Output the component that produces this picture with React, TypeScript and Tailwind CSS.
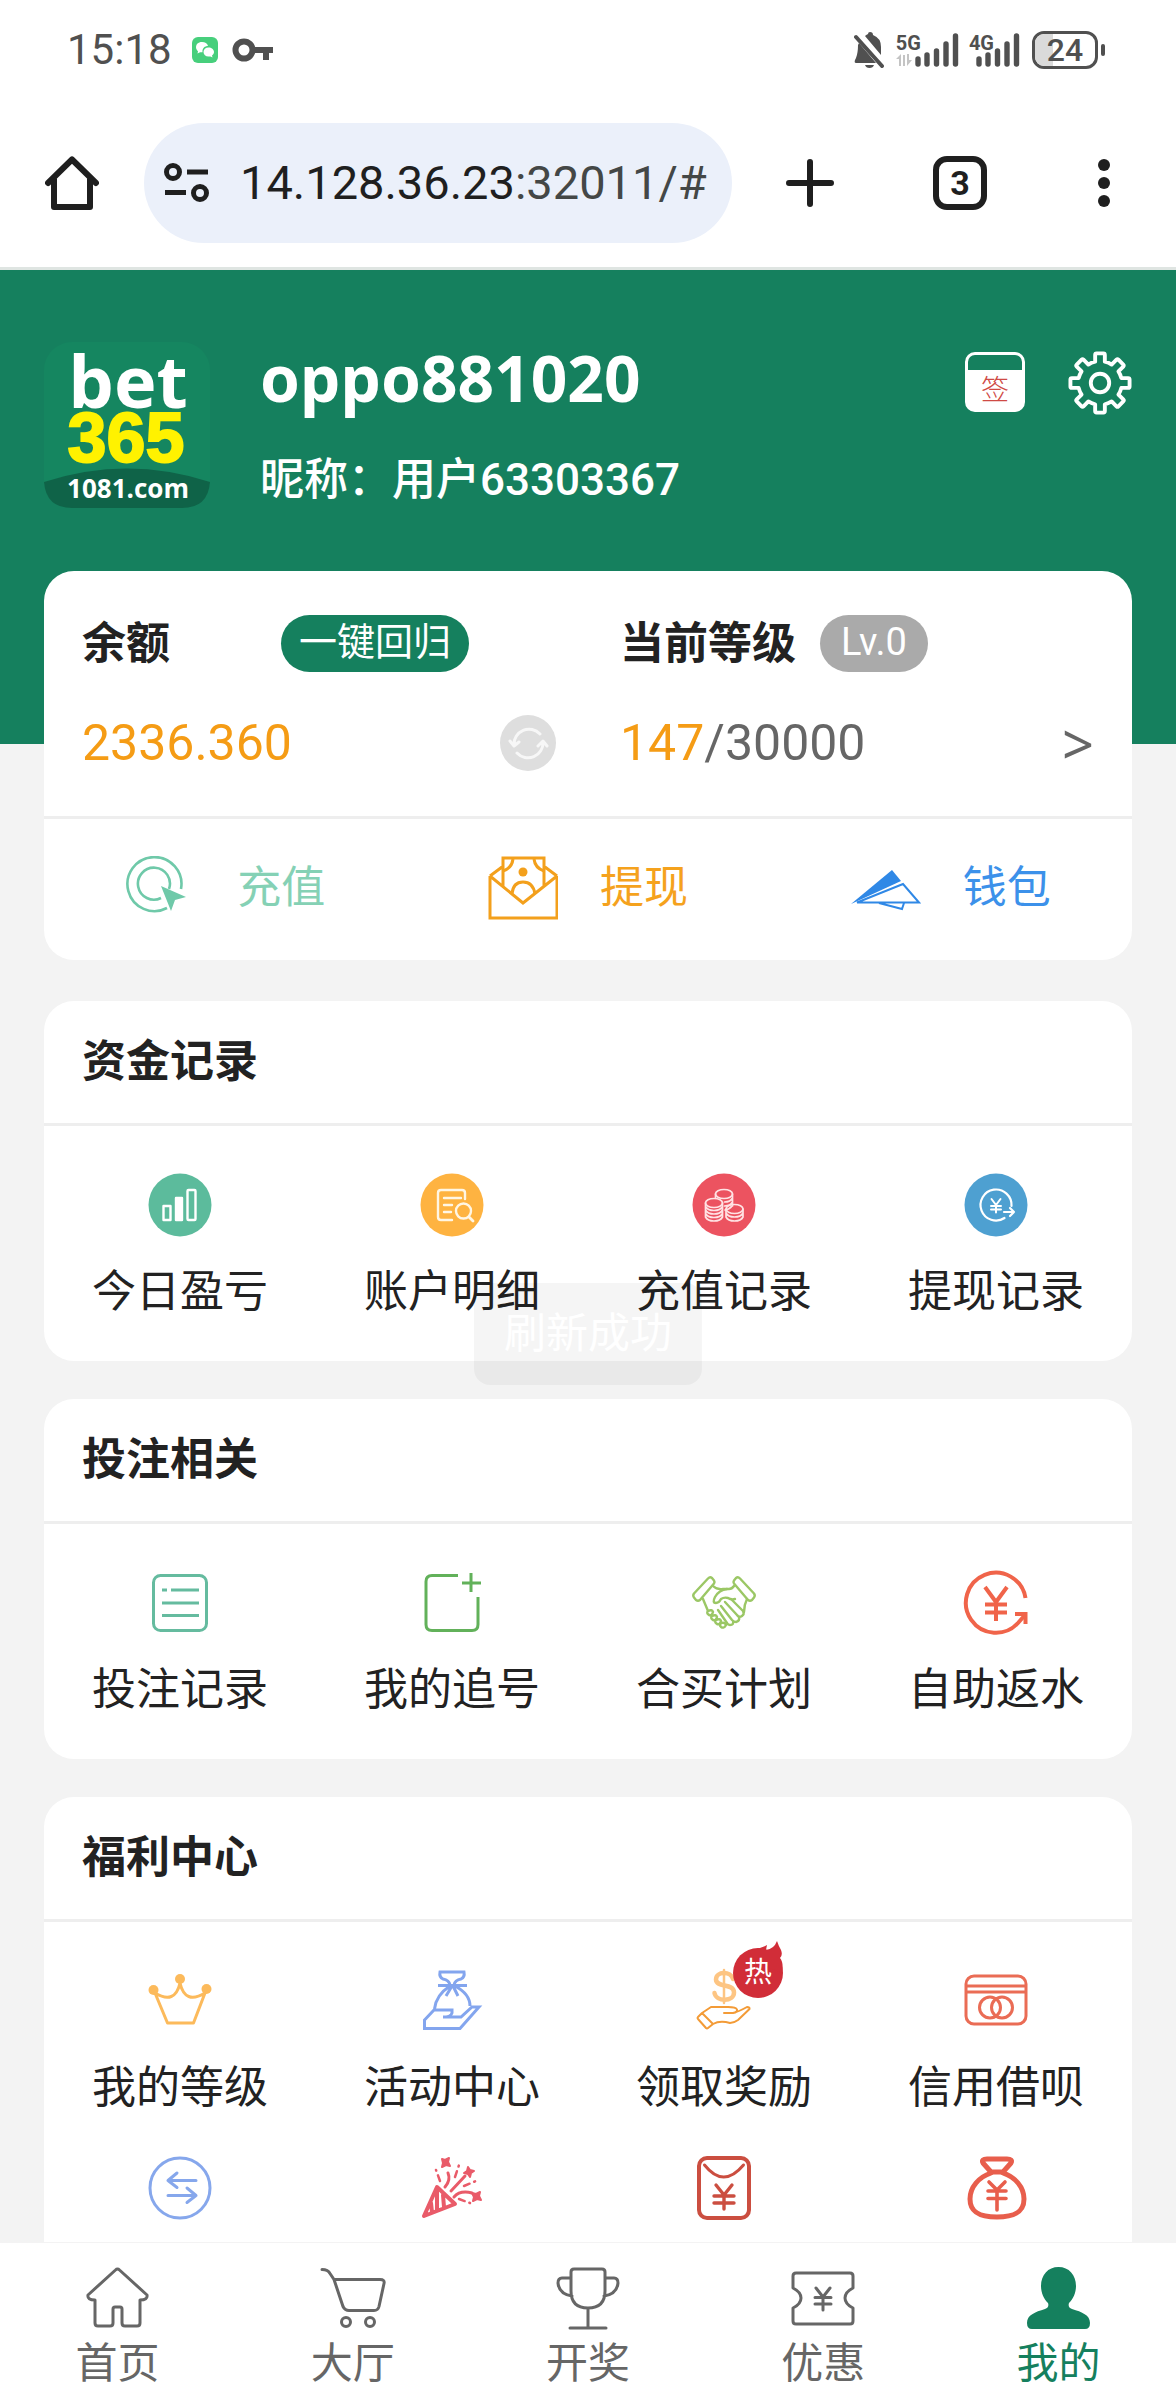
import React from 'react';

type IconProps = { className?: string; children: React.ReactNode };

// 64x64 stroke icon shared by the menu cards and the tab bar
function Icon({ className = '', children }: IconProps) {
    return (
        <svg
            viewBox="0 0 64 64"
            className={`h-16 w-16 shrink-0 overflow-visible ${className}`}
            fill="none"
            stroke="currentColor"
            strokeWidth="3"
            strokeLinecap="round"
            strokeLinejoin="round"
            aria-hidden="true"
        >
            {children}
        </svg>
    );
}

function ProfitIcon() {
    return (
        <Icon className="text-white">
            <circle cx="32" cy="32" r="31.5" fill="#5cbb9c" stroke="none" />
            <g strokeWidth="2.4">
                <rect x="15.5" y="33" width="7" height="14" />
                <rect x="28" y="25" width="6" height="22" fill="currentColor" />
                <rect x="39.5" y="17" width="8" height="30" rx="1" />
            </g>
        </Icon>
    );
}

function LedgerIcon() {
    return (
        <Icon className="text-[#fff6e4]">
            <circle cx="32" cy="32" r="31.5" fill="#feb341" stroke="none" />
            <path strokeWidth="2.4" d="M45 26V20q0-3-3-3H21q-3 0-3 3v24q0 3 3 3h11M24 25h17M24 32h8M24 39h7" />
            <circle cx="43.5" cy="38" r="7.5" strokeWidth="2.4" />
            <path strokeWidth="2.8" d="M49 44l4 4" />
        </Icon>
    );
}

function CoinsIcon() {
    return (
        <Icon className="text-[#ffe3e4]">
            <circle cx="32" cy="32" r="31.5" fill="#ec5360" stroke="none" />
            <g strokeWidth="1.7">
                <ellipse cx="32" cy="21" rx="8.5" ry="4.5" />
                <path d="M23.5 21v4M40.5 21v12M40.5 25q-2 4-8 4M40.5 29q-2 4-8 4M40 33q-2 3-7 4" />
                <ellipse cx="22" cy="30" rx="8.5" ry="4.5" />
                <path d="M13.5 30v14q2 4 8.5 4t8.5-4V30M13.5 33.5q2 4 8.5 4t8.5-4M13.5 37q2 4 8.5 4t8.5-4M13.5 40.5q2 4 8.5 4t8.5-4" />
                <ellipse cx="42.5" cy="36" rx="8.5" ry="4.5" />
                <path d="M34 36v8q2 4 8.5 4t8.5-4v-8M34 40q2 4 8.5 4t8.5-4" />
            </g>
        </Icon>
    );
}

function WithdrawLogIcon() {
    return (
        <Icon className="text-white">
            <circle cx="32" cy="32" r="31.5" fill="#4ea0d1" stroke="none" />
            <path strokeWidth="2.2" d="M47.5 33a15.5 15.5 0 1 0-7 12" />
            <path strokeWidth="2" d="M27.5 26l4.5 6 4.5-6M32 32v7.5M27 33h10M27 36.5h10" />
            <path strokeWidth="2.2" d="M40 39h10M46 35l4 4-4 4" />
        </Icon>
    );
}

function BetListIcon() {
    return (
        <Icon className="text-[#65bb9f]">
            <rect x="5.5" y="4.5" width="53" height="55" rx="7" />
            <path strokeLinecap="butt" d="M14 19h5M23 19h28M14 32h37M14 44.5h37" />
        </Icon>
    );
}

function ChaseIcon() {
    return (
        <Icon className="text-[#62b15a]">
            <path strokeLinecap="butt" d="M38 4.5H12q-6 0-6 6v43q0 6 6 6h40q6 0 6-6V26" />
            <path strokeLinecap="butt" d="M51 2v19M42 12h19" />
        </Icon>
    );
}

function HandshakeIcon() {
    return (
        <Icon className="text-[#9bc765]">
            <g strokeWidth="2.4">
                <path d="M16 7.5q2-2 4-.5l2 2.5q1 1.5 0 3L8 29q-2 1.5-4 0l-2-2.5q-1.5-2 0-4Z" />
                <path d="M48 7.5q-2-2-4-.5l-2 2.5q-1 1.5 0 3L56 29q2 1.5 4 0l2-2.5q1.5-2 0-4Z" />
                <path d="M21 15q4 4 10 3h6q3 0 5-3M11 28l5 12" />
                <path d="M35 18q-8 1-12 8-3 6 1 6 3 0 5-4 3-2 7-1 3 2 7 1" />
                <path d="M55 28q-3 6-3 13M39 28l12 12q2 3-1 5t-5-1L33 31M47 46q1 4-3 5-2 0-4-2L29 35M41 50q1 4-3 4-2 0-3-2L26 39" />
                <path d="M16 40q4-2 5 1-1 4-4 3-3-2-1-4ZM20 45q4-2 5 1-1 4-4 3-3-2-1-4ZM24 49q4-2 5 1-1 4-4 3-3-2-1-4ZM29 52q4-1 5 2-2 4-5 2-2-2 0-4Z" />
            </g>
        </Icon>
    );
}

function RebateIcon() {
    return (
        <Icon className="text-[#f0644a]">
            <g strokeWidth="4" strokeLinecap="butt" strokeLinejoin="miter">
                <path d="M61.5 27A30 30 0 1 0 54 52l7-8" />
                <path d="M51 43h10.5v10" />
                <path d="M21 16l11 15 11-15M32 30v20M21 33.5h22M21 41.5h22" />
            </g>
        </Icon>
    );
}

function CrownIcon() {
    return (
        <Icon className="text-[#fcba5b]">
            <path d="M7 24l12.5 30h26L57 24Q37 36 32 14 27 36 7 24Z" />
            <g fill="currentColor" stroke="none">
                <circle cx="5.5" cy="21" r="5" />
                <circle cx="32" cy="10" r="5" />
                <circle cx="58.5" cy="20" r="5" />
            </g>
        </Icon>
    );
}

function ActivityIcon() {
    return (
        <Icon className="text-[#83a5ee]">
            <g strokeLinejoin="miter" strokeLinecap="butt">
                <path d="M30 16q-1-5-7-6-4-2-3-7h24q1 5-3 7-6 1-7 6M18 16.5h29" />
                <path d="M30 17q-14 9-15.5 23M35 17q15 8 15 20M32 17l-6 10M33 17l5 10" />
                <path d="M14 41h18v3q-1 4-9 4h18l11-10h7L40 59.5H4.5V51Z" />
            </g>
        </Icon>
    );
}

function RewardIcon() {
    return (
        <Icon className="text-[#f39b37]">
            <g className="text-[#fdc583]" strokeWidth="4.5">
                <path d="M41 10C39 2 24 2 24 10.5 24 19 42 14 42 23.5 42 33 24 33 22.5 24" />
                <path strokeWidth="2.5" d="M32 1v33" />
            </g>
            <path
                strokeWidth="2"
                d="M10 44l-4 4q-1 1 0 2l8 9q1 1 2 0l5-4ZM10 44l9-6h17q8 0 9 2.5t-4 3.5H32M41 44q5-1 14-6 3 0 2.5 2L46 51q-4 3-8 3-10-3-17 1"
            />
        </Icon>
    );
}

function CreditIcon() {
    return (
        <Icon className="text-[#ea6c55]">
            <rect x="2" y="7" width="60" height="48" rx="8" />
            <path strokeLinecap="butt" d="M2 17h60M2 23h60" />
            <circle cx="26" cy="38.5" r="10.5" />
            <circle cx="38" cy="38.5" r="10.5" />
        </Icon>
    );
}

function TransferIcon() {
    return (
        <Icon className="text-[#86a7ec]">
            <circle cx="32" cy="32" r="30" />
            <path d="M48 24.5H20M29 17l-9 7.5 9 7M20 39.5h28M39 32l9 7.5-9 7" />
        </Icon>
    );
}

function PartyIcon() {
    return (
        <Icon className="text-[#e95b69]">
            <path strokeWidth="4" d="M17 31l18 17L4 60ZM17 34v20M23 39l1 12M11 47l1 9" />
            <g strokeWidth="3">
                <path d="M25 31q6-7 3-14M31 35l14-15M34 41q6-7 18-4" />
                <path strokeWidth="2.5" strokeDasharray="6 5 1 9" d="M20 25l-4-11M35 21l4-12M44 30l12-5M39 43l11 4" />
            </g>
            <g fill="currentColor" strokeWidth="2">
                <path d="M22 3l3 1 4-2-1 4 2 4-4-1-4 2 1-4ZM48 11l2 3 4 1-3 2-1 4-2-3-4-1 3-2ZM60 36l-1 4 2 4-4-1-4 2 1-4-2-4 4 1Z" />
            </g>
        </Icon>
    );
}

function RedPacketIcon() {
    return (
        <Icon className="text-[#cb4e40]">
            <rect x="7" y="2" width="50" height="60" rx="8" strokeWidth="4" />
            <path d="M12.5 9q19 24 39 0" />
            <path strokeWidth="3.4" d="M24 29l8 10 8-10M32 39v14M22 40h20M22 47h20" />
        </Icon>
    );
}

function BonusIcon() {
    return (
        <Icon className="text-[#e85e4c]">
            <g strokeWidth="5">
                <path d="M23 3h20q6 0 4 4l-8 9H27l-8-9q-2-4 4-4Z" />
                <path d="M27 17C15 21 6 31 6 43c0 13 9 18 27 18s27-5 27-18c0-12-9-22-21-26" />
            </g>
            <path strokeWidth="3.6" d="M25 26l8 8 8-8M33 34v20M24 35h18M24 42.5h18" />
        </Icon>
    );
}

type MenuItem = { label: string; icon: React.ReactNode; hot?: boolean; hideLabel?: boolean };

const fundItems: MenuItem[] = [
    { label: '今日盈亏', icon: <ProfitIcon /> },
    { label: '账户明细', icon: <LedgerIcon /> },
    { label: '充值记录', icon: <CoinsIcon /> },
    { label: '提现记录', icon: <WithdrawLogIcon /> },
];

const betItems: MenuItem[] = [
    { label: '投注记录', icon: <BetListIcon /> },
    { label: '我的追号', icon: <ChaseIcon /> },
    { label: '合买计划', icon: <HandshakeIcon /> },
    { label: '自助返水', icon: <RebateIcon /> },
];

const welfareItems: MenuItem[] = [
    { label: '我的等级', icon: <CrownIcon /> },
    { label: '活动中心', icon: <ActivityIcon /> },
    { label: '领取奖励', icon: <RewardIcon />, hot: true },
    { label: '信用借呗', icon: <CreditIcon /> },
    { label: '转换', icon: <TransferIcon />, hideLabel: true },
    { label: '庆典', icon: <PartyIcon />, hideLabel: true },
    { label: '红包', icon: <RedPacketIcon />, hideLabel: true },
    { label: '奖金', icon: <BonusIcon />, hideLabel: true },
];

function HotBadge() {
    return (
        <span className="absolute -top-6 left-10 flex h-14 w-[52px] items-center justify-center text-[28px] leading-none text-white">
            <svg viewBox="0 0 52 56" className="absolute inset-0 h-full w-full overflow-visible" fill="#d12d38" aria-hidden="true">
                <circle cx="26" cy="28" r="25" />
                <path d="M16 6Q28 4 35 0l-1 5Q42 4 45-4q2 6 4 9 2 5-1 8 4 5 2 15L30 20Z" />
            </svg>
            <span className="relative">热</span>
        </span>
    );
}

function MenuCard({ title, items, open, children }: { title: string; items: MenuItem[]; open?: boolean; children?: React.ReactNode }) {
    return (
        <section className={open ? 'relative rounded-t-[30px] bg-white pb-[22px]' : 'relative rounded-[30px] bg-white pb-9'}>
            <h2 className="border-b-[3px] border-[#eee] px-[38px] text-[44px] leading-[122px] font-bold">{title}</h2>
            <div className="grid grid-cols-4 gap-y-[35px] pt-[47px]">
                {items.map((item) => (
                    <button key={item.label} type="button" aria-label={item.label} className="flex flex-col items-center">
                        <span className="relative">
                            {item.icon}
                            {item.hot && <HotBadge />}
                        </span>
                        {!item.hideLabel && <span className="mt-[22px] text-[44px] leading-[66px]">{item.label}</span>}
                    </button>
                ))}
            </div>
            {children}
        </section>
    );
}

function SignalBars() {
    return (
        <svg viewBox="0 0 44 34" className="h-[34px] w-11" stroke="currentColor" strokeWidth="5.4" strokeLinecap="round" aria-hidden="true">
            <path d="M3 26v5M12 22v9M21.5 18v13M31 11v20M40.5 3v28" />
        </svg>
    );
}

function StatusBar() {
    return (
        <div className="flex h-[100px] items-center pr-[71px] pl-[67px] text-[#505050]">
            <span className="text-[42px] leading-none">15:18</span>
            <svg viewBox="0 0 26 26" className="ml-5 h-[26px] w-[26px]" aria-hidden="true">
                <rect width="26" height="26" rx="6" fill="#47cf7c" />
                <path fill="#fff" d="M10 5c-4 0-6 2.5-6 5.2 0 1.8 1 3 2 4l-.5 2.2 2.5-1.2h2.5C10 11 13 9 16 9c-.5-2.5-3-4-6-4Z" />
                <path fill="#fff" d="M16.5 10.5c-3 0-5 2-5 4.5s2 4.5 5 4.5h2l2 1-.5-2c1.2-1 2-2 2-3.5 0-2.5-2.5-4.5-5.5-4.5Z" />
            </svg>
            <svg viewBox="0 0 42 26" className="ml-[14px] h-[26px] w-[42px]" fill="none" stroke="currentColor" aria-hidden="true">
                <circle cx="12" cy="13" r="8.5" strokeWidth="6" />
                <path strokeWidth="6" d="M21 13h20M34 13v10" />
            </svg>
            <div className="ml-auto flex items-center">
                <svg viewBox="0 0 30 36" className="mr-3 h-9 w-[30px]" fill="currentColor" aria-hidden="true">
                    <path d="M4 13q0 8-2 13l-1 2q-1 3 1 3h20L5 11ZM11 4q1-1 3-2 0-2 2-2 3 0 3 3 8 3 8 12v8ZM11 33h9q-1 3-4.5 3T11 33Z" />
                    <path d="M2 5l26 29" stroke="currentColor" strokeWidth="4" strokeLinecap="round" />
                </svg>
                <span className="flex">
                    <span className="-mr-1.5 flex flex-col items-start">
                        <span className="text-[20px] leading-[20px] font-bold">5G</span>
                        <svg viewBox="0 0 16 12" className="h-[14px] w-4 text-[#c4c4c4]" fill="currentColor" aria-hidden="true">
                            <path d="M0 5l5-5v12H3V5ZM7 1h2v11H7ZM11 0h2v6h3l-5 6Z" />
                        </svg>
                    </span>
                    <SignalBars />
                </span>
                <span className="ml-[10px] flex">
                    <span className="-mr-[18px] text-[20px] leading-[20px] font-bold">4G</span>
                    <SignalBars />
                </span>
                <span className="relative ml-3 flex h-[38px] w-[66px] items-center justify-center overflow-hidden rounded-xl border-[3px] border-current text-[32px] leading-none font-medium">
                    <span className="absolute inset-y-0 left-0 w-[18px] bg-[#dadada]" />
                    <span className="relative">24</span>
                </span>
                <span className="ml-[3px] h-3 w-1 rounded-full bg-current" />
            </div>
        </div>
    );
}

function BrowserBar() {
    return (
        <div className="flex h-[170px] items-center border-b-[3px] border-[#dfe5e2] pr-[60px] pb-[2px] pl-[45px] text-[#1f1f1f]">
            <button type="button" aria-label="主页" className="shrink-0">
                <svg viewBox="0 0 54 54" className="h-[54px] w-[54px]" fill="none" stroke="currentColor" strokeWidth="6" strokeLinecap="round" strokeLinejoin="round" aria-hidden="true">
                    <path d="M3 27L27 3.5 51 27M9 23v28h36V23" />
                </svg>
            </button>
            <form className="ml-[45px] flex h-[120px] min-w-0 flex-1 items-center rounded-full bg-[#ebf0fa] pr-4 pl-5" onSubmit={(e) => e.preventDefault()}>
                <svg viewBox="0 0 46 40" className="h-10 w-[46px] shrink-0" fill="none" stroke="currentColor" strokeWidth="5" aria-hidden="true">
                    <circle cx="9" cy="9" r="6.5" />
                    <path d="M23 9h21M1 29.5h21" />
                    <circle cx="36" cy="30" r="6.5" />
                </svg>
                <label htmlFor="url" className="ml-[30px] flex min-w-0 flex-1 overflow-hidden text-[47px] leading-[60px] whitespace-nowrap">
                    <span>14.128.36.23</span>
                    <input id="url" aria-label="网址" defaultValue=":32011/#" className="w-full min-w-0 flex-1 bg-transparent text-[#444746] outline-none" />
                </label>
            </form>
            <button type="button" aria-label="新标签页" className="ml-[54px] shrink-0">
                <svg viewBox="0 0 48 48" className="h-12 w-12" stroke="currentColor" strokeWidth="6" strokeLinecap="round" aria-hidden="true">
                    <path d="M24 3v42M3 24h42" />
                </svg>
            </button>
            <button type="button" className="ml-[99px] flex h-[54px] w-[54px] shrink-0 items-center justify-center rounded-[14px] border-6 border-current text-[34px] leading-none font-bold">
                3
            </button>
            <button type="button" aria-label="更多" className="ml-[105px] flex w-6 shrink-0 flex-col items-center gap-[6px]">
                <span className="h-3 w-3 rounded-full bg-current" />
                <span className="h-3 w-3 rounded-full bg-current" />
                <span className="h-3 w-3 rounded-full bg-current" />
            </button>
        </div>
    );
}

function Logo() {
    return (
        <svg viewBox="0 0 166 166" className="h-[166px] w-[166px] shrink-0" textAnchor="middle" fontWeight="700" role="img" aria-label="bet365">
            <rect width="166" height="166" rx="28" fill="#158660" />
            <path d="M0 140Q83 113 166 140 164 166 138 166H28Q2 166 0 140Z" fill="#0f6348" />
            <text x="84" y="66" fontFamily="Open Sans, sans-serif" fontSize="72" fill="#fff">bet</text>
            <text x="82" y="120" fontFamily="Liberation Sans, sans-serif" fontSize="70" fill="#fff200" stroke="#fff200" strokeWidth="2">365</text>
            <text x="84" y="156" fontFamily="Open Sans, sans-serif" fontSize="26" fill="#fff">1081.com</text>
        </svg>
    );
}

function ProfileHeader() {
    return (
        <header className="flex items-start bg-[#15805e] px-11 pt-[72px] pb-[236px] text-white">
            <Logo />
            <div className="ml-[50px] flex-1">
                <h1 className="font-['Noto_Sans'] text-[64px] leading-[72px] font-bold">oppo881020</h1>
                <p className="mt-[38px] text-[44px] leading-[56px] font-medium">昵称：用户63303367</p>
            </div>
            <button type="button" className="mt-[10px] flex h-[60px] w-[60px] items-end justify-center rounded-[10px] border-[3px] border-white bg-linear-to-b from-[#15805e] from-27% to-white to-27% text-[28px] leading-[36px] font-light text-[#cf4a45]">
                签
            </button>
            <button type="button" aria-label="设置" className="mt-[9px] ml-[43px]">
                <svg viewBox="-1 -1 66 66" className="h-16 w-16" fill="none" stroke="currentColor" strokeWidth="4" strokeLinejoin="round" aria-hidden="true">
                    <path d="M27 10V3q0-1.5 1.5-1.5h7Q37 1.5 37 3v7q4 1 7 3l5-5q1-1 2 0l5 5q1 1 0 2l-5 5q2 3 3 7h7q1.5 0 1.5 1.5v7Q62.5 37 61 37h-7q-1 4-3 7l5 5q1 1 0 2l-5 5q-1 1-2 0l-5-5q-3 2-7 3v7q0 1.5-1.5 1.5h-7Q27 62.5 27 61v-7q-4-1-7-3l-5 5q-1 1-2 0l-5-5q-1-1 0-2l5-5q-2-3-3-7H3q-1.500 0-1.500-1.500v-7Q1.5 27 3 27h7q1-4 3-7l-5-5q-1-1 0-2l5-5q1-1 2 0l5 5q3-2 7-3Z" />
                    <circle cx="32" cy="32" r="9.5" />
                </svg>
            </button>
        </header>
    );
}

function BalanceCard() {
    return (
        <section className="rounded-[30px] bg-white">
            <div className="grid grid-cols-2 border-b-[3px] border-[#eee] pt-11 pb-11">
                <div className="pr-8 pl-[38px]">
                    <div className="flex h-[57px] items-center">
                        <h2 className="text-[44px] leading-[54px] font-bold">余额</h2>
                        <button type="button" className="ml-[111px] h-[57px] rounded-full bg-[#15805e] px-[18px] pb-1 text-[38px] leading-[50px] text-white">
                            一键回归
                        </button>
                    </div>
                    <div className="mt-[42px] flex h-[58px] items-center justify-between">
                        <span className="text-[50px] leading-[58px] text-[#f59c15]">2336.360</span>
                        <button type="button" aria-label="刷新" className="h-14 w-14 rounded-full bg-[#dedede] text-[#f7f7f7]">
                            <svg viewBox="0 0 56 56" className="h-14 w-14" fill="none" stroke="currentColor" strokeWidth="3" strokeLinecap="round" strokeLinejoin="round" aria-hidden="true">
                                <path d="M40 19A15 15 0 0 0 14 30M10 26l4 5 5-4M17 38a15 15 0 0 0 26-11M38 31l5-5 4 5" />
                            </svg>
                        </button>
                    </div>
                </div>
                <div className="pr-[38px] pl-8">
                    <div className="flex h-[57px] items-center">
                        <h2 className="text-[44px] leading-[54px] font-bold">当前等级</h2>
                        <span className="ml-6 h-[57px] rounded-full bg-[#aaa] px-[21px] text-[38px] leading-[54px] text-white">Lv.0</span>
                    </div>
                    <a href="#level" className="mt-[42px] flex h-[58px] items-center justify-between text-[50px] leading-[58px] text-[#666]">
                        <span>
                            <span className="text-[#f59c15]">147</span>/30000
                        </span>
                        <span className="font-['Noto_Sans'] text-[56px]">&gt;</span>
                    </a>
                </div>
            </div>
            <div className="grid h-[141px] grid-cols-3 pb-1 text-[44px]">
                <button type="button" className="flex items-center justify-center gap-[42px] text-[#85d1b5]">
                    <svg viewBox="0 0 70 64" className="h-16 w-[70px]" fill="none" stroke="#6fc9a9" strokeWidth="2.6" aria-hidden="true">
                        <path d="M56 33A27 27 0 1 0 42 52M44 33a16 16 0 1 0-8 9" />
                        <path fill="#6fc9a9" stroke="none" d="M36 30l25 11-11 3-4 11Z" />
                    </svg>
                    充值
                </button>
                <button type="button" className="flex items-center justify-center gap-[42px] text-[#f5a21d]">
                    <svg viewBox="0 0 70 64" className="h-16 w-[70px]" fill="none" stroke="#f3a01c" strokeWidth="3" aria-hidden="true">
                        <path d="M2 20v42h67V20M2 20l33 27 34-27M2 20l12-9M69 20l-12-9M15 30V2h41v28" />
                        <path d="M25 3q-1 9-10 12M46 3q1 9 10 12M24 38q1-12 11-12t12 12" />
                        <circle cx="35" cy="16" r="4.5" fill="#f3a01c" stroke="none" />
                    </svg>
                    提现
                </button>
                <button type="button" className="flex items-center justify-center gap-[42px] text-[#3c91ea]">
                    <svg viewBox="0 0 70 64" className="h-16 w-[70px]" fill="none" stroke="#2f88e6" strokeWidth="2" aria-hidden="true">
                        <path fill="#2f88e6" stroke="none" d="M41 14l9 11L0 48Z" />
                        <path d="M52 28l16 18.5H6ZM28 47l23 6 2-6" />
                    </svg>
                    钱包
                </button>
            </div>
        </section>
    );
}

function TabBar() {
    const tabs = [
        {
            label: '首页',
            icon: (
                <path d="M31.5 2q-1 0-2 1L2 28q-1 5 7 5v23q0 3 3 3h12q3 0 3-3V42q0-2 2-2h5q2 0 2 2v14q0 3 3 3h12q3 0 3-3V33q8 0 7-5L33.5 3q-1-1-2-1Z" />
            ),
        },
        {
            label: '大厅',
            icon: (
                <>
                    <path d="M1 2.5q6 0 8 4l4 6h46q5 0 4 4l-5 23q-1 4-5 4H28q-4 0-6-4L13 12.5" />
                    <circle cx="25" cy="55" r="4.5" />
                    <circle cx="49" cy="55" r="4.5" />
                </>
            ),
        },
        {
            label: '开奖',
            icon: <path d="M18 2h28q3 0 3 3v19q0 17-17 17T15 24V5q0-3 3-3ZM15 11H6q-4 0-4 5 1 11 14 13M49 11h9q4 0 4 5-1 11-14 13M32 41v20M14 61h36" />,
        },
        {
            label: '优惠',
            icon: (
                <>
                    <path d="M5 6h54q3 0 3 3v12q-8 4-8 10t8 10v13q0 3-3 3H5q-3 0-3-3V41q8-4 8-10T2 21V9q0-3 3-3Z" />
                    <path d="M25 21l7 9 7-9M32 30v13M24 30.5h16M24 37h16" />
                </>
            ),
        },
        {
            label: '我的',
            icon: (
                <path
                    fill="currentColor"
                    stroke="none"
                    d="M32.5 0C43 0 50 8 50 19c0 7-3 13-7 17-1 3 0 5 3 6 10 3 18 6 18 14q0 6-5 6H6q-5 0-5-6c0-8 8-11 18-14 3-1 4-3 3-6-4-4-7-10-7-17C15 8 22 0 32.5 0Z"
                />
            ),
        },
    ];

    return (
        <nav className="sticky bottom-0 grid grid-cols-5 bg-white pt-6 pb-[3px]">
            {tabs.map((tab) => (
                <a
                    key={tab.label}
                    href="#"
                    className={tab.label === '我的' ? 'flex flex-col items-center text-[#15805e]' : 'flex flex-col items-center text-[#666]'}
                >
                    <Icon>{tab.icon}</Icon>
                    <span className="text-[42px] leading-[66px]">{tab.label}</span>
                </a>
            ))}
        </nav>
    );
}

export default function App() {
    return (
        <div className="flex min-h-screen flex-col bg-[#f3f3f3] font-[Roboto,'Noto_Sans_CJK_SC',sans-serif] text-[#222]">
            <div className="bg-white">
                <StatusBar />
                <BrowserBar />
            </div>
            <ProfileHeader />
            <main className="-mt-[173px] flex flex-1 flex-col gap-[38px] px-11">
                <div className="mb-[3px]">
                    <BalanceCard />
                </div>
                <MenuCard title="资金记录" items={fundItems}>
                    <div role="status" className="absolute -bottom-6 left-1/2 z-10 -translate-x-1/2 rounded-[16px] bg-black/4 px-[30px] text-[42px] leading-[102px] whitespace-nowrap text-white">
                        刷新成功
                    </div>
                </MenuCard>
                <MenuCard title="投注相关" items={betItems} />
                <MenuCard title="福利中心" items={welfareItems} open />
            </main>
            <TabBar />
        </div>
    );
}
